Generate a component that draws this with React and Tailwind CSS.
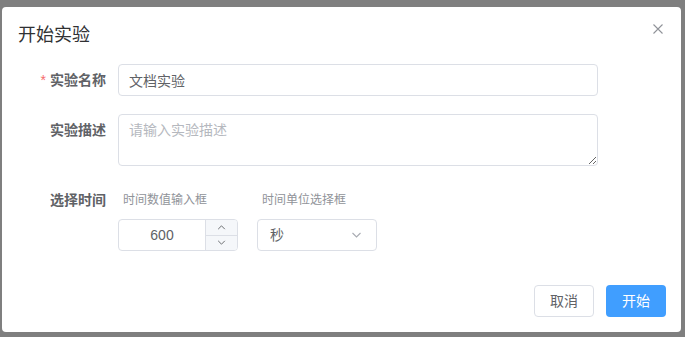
import React from 'react';

const Chevron = ({ dir = 'down', className = '' }) => (
  <svg className={className} viewBox="0 0 10 6" fill="none" stroke="currentColor" strokeWidth="1.1">
    {dir === 'down' ? <path d="M1 1l4 4 4-4" /> : <path d="M1 5l4-4 4 4" />}
  </svg>
);

const App = () => {
  return (
    <div className="w-[685px] h-[337px] bg-[#7f7f7f] pt-[7px] pl-[2px] font-['Liberation_Sans','Noto_Sans_CJK_SC',sans-serif]">
      <div className="w-[679px] h-[325px] bg-white rounded-[4px] flex flex-col">
        {/* header */}
        <div className="flex items-start justify-between pl-[16px] pr-[18px] pt-[16px]">
          <h2 className="text-[18px] leading-[24px] text-[#303133]">开始实验</h2>
          <button className="mt-[1px] text-[#909399]">
            <svg className="w-[10px] h-[10px]" viewBox="0 0 10 10" stroke="currentColor" strokeWidth="1.1">
              <path d="M0.5 0.5l9 9M9.5 0.5l-9 9" />
            </svg>
          </button>
        </div>

        {/* form */}
        <div className="mt-[17px] flex flex-col gap-[18px]">
          <div className="flex">
            <label className="w-[104px] text-right leading-[32px] text-[14px] font-bold text-[#606266]">
              <span className="text-[#f56c6c] font-normal mr-[4px]">*</span>实验名称
            </label>
            <input
              className="ml-[12px] w-[480px] h-[32px] border border-[#dcdfe6] rounded-[4px] px-[10px] text-[14px] text-[#606266] outline-none"
              defaultValue="文档实验"
            />
          </div>

          <div className="flex">
            <label className="w-[104px] text-right leading-[32px] text-[14px] font-bold text-[#606266]">实验描述</label>
            <textarea
              rows={2}
              className="ml-[12px] w-[480px] h-[52px] border border-[#dcdfe6] rounded-[4px] px-[10px] py-[5px] text-[14px] leading-[21px] text-[#606266] placeholder:text-[#b5b8be] outline-none resize-y"
              placeholder="请输入实验描述"
            />
          </div>

          <div className="flex">
            <label className="w-[104px] text-right leading-[32px] text-[14px] font-bold text-[#606266]">选择时间</label>
            <div className="ml-[12px] flex flex-col">
              <div className="flex gap-[19px] mb-[3px]">
                <span className="w-[120px] pl-[5px] leading-[32px] text-[12px] text-[#909399]">时间数值输入框</span>
                <span className="w-[120px] pl-[5px] leading-[32px] text-[12px] text-[#909399]">时间单位选择框</span>
              </div>
              <div className="flex gap-[19px]">
                <div className="w-[120px] h-[32px] border border-[#dcdfe6] rounded-[4px] flex overflow-hidden">
                  <div className="flex-1 flex items-center justify-center text-[14px] text-[#606266]">600</div>
                  <div className="w-[32px] border-l border-[#dcdfe6] bg-[#f5f7fa] flex flex-col text-[#606266]">
                    <div className="flex-1 flex items-center justify-center border-b border-[#dcdfe6]">
                      <Chevron dir="up" className="w-[9px] h-[5px]" />
                    </div>
                    <div className="flex-1 flex items-center justify-center">
                      <Chevron className="w-[9px] h-[5px]" />
                    </div>
                  </div>
                </div>
                <div className="w-[120px] h-[32px] border border-[#dcdfe6] rounded-[4px] flex items-center justify-between pl-[12px] pr-[14px]">
                  <span className="text-[14px] text-[#606266]">秒</span>
                  <Chevron className="w-[11px] h-[6px] text-[#a8abb2]" />
                </div>
              </div>
            </div>
          </div>
        </div>

        {/* footer */}
        <div className="mt-auto flex justify-end gap-[12px] pr-[15px] pb-[15px]">
          <button className="w-[60px] h-[32px] border border-[#dcdfe6] rounded-[4px] text-[14px] text-[#606266] bg-white">取消</button>
          <button className="w-[60px] h-[32px] rounded-[4px] text-[14px] text-white bg-[#409eff]">开始</button>
        </div>
      </div>
    </div>
  );
};

export default App;
